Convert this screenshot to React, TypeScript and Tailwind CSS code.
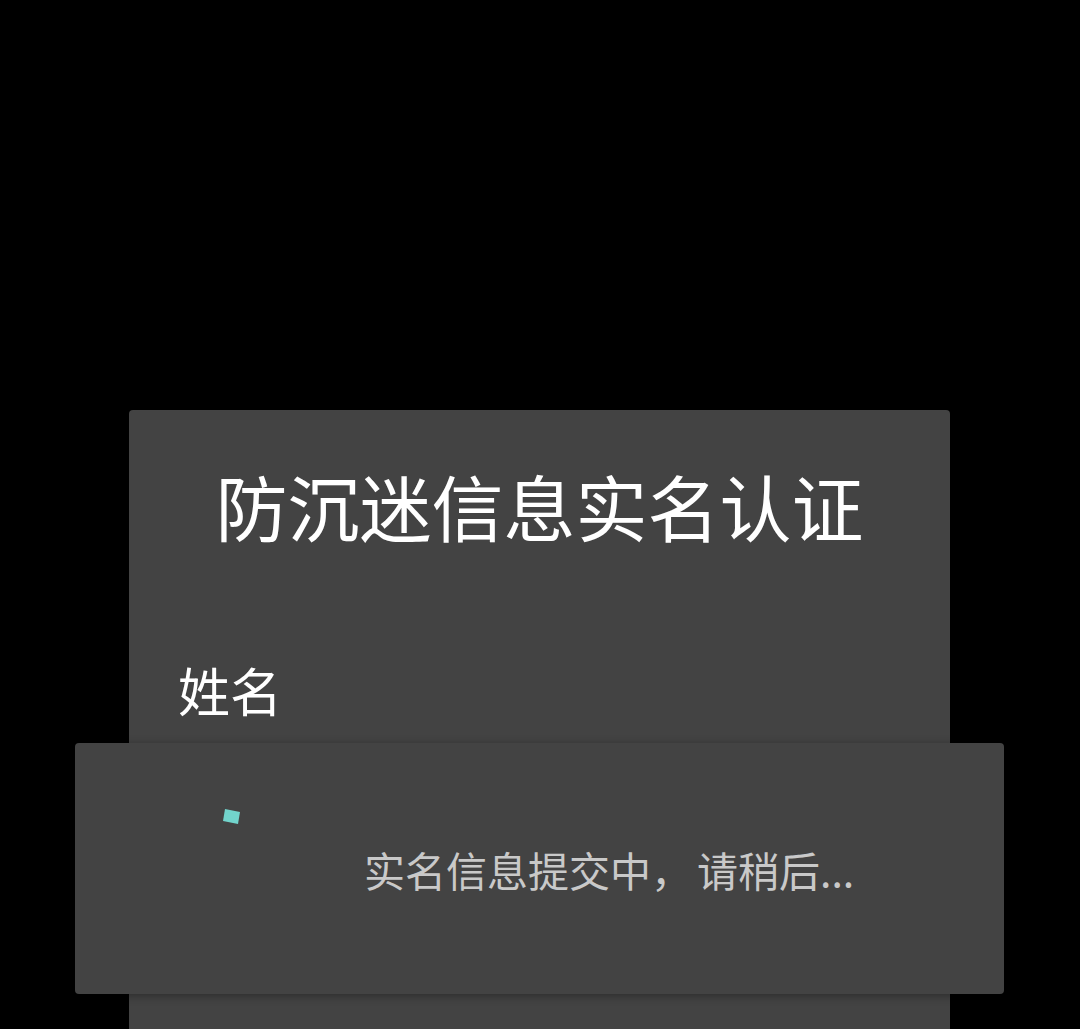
export default function App() {
  return (
    <div
      className="relative h-[1029px] w-[1080px] overflow-hidden bg-black"
      style={{ fontFamily: '"Noto Sans CJK SC", "Noto Sans", sans-serif' }}
    >
      {/* Real-name verification dialog (behind) */}
      <div className="pt-[410px] pl-[129px]">
        <div className="h-[700px] w-[821px] rounded-[4px] bg-[#434343]">
          <h1 className="pt-[59px] text-center text-[72px] leading-none font-normal text-white">
            防沉迷信息实名认证
          </h1>
          <p className="mt-[123px] pl-[49px] text-[52px] leading-none text-white">
            姓名
          </p>
        </div>
      </div>

      {/* Progress dialog (front) */}
      <div className="absolute top-[743px] left-[75px] h-[251px] w-[929px] rounded-[4px] bg-[#434343] shadow-[0_2px_10px_rgba(0,0,0,0.35)]">
        <svg
          className="absolute top-[62px] left-[144px]"
          width="24"
          height="24"
          viewBox="0 0 24 24"
        >
          <polygon points="6,4 21,7 19,19 4,16" fill="#72d4cc" />
        </svg>
        <div className="flex h-full items-start pt-[106px] pl-[289px]">
          <span className="text-[41px] leading-none text-[#c9c9c9]">
            实名信息提交中<span className="mr-[5px]">，</span>请稍后...
          </span>
        </div>
      </div>
    </div>
  );
}
